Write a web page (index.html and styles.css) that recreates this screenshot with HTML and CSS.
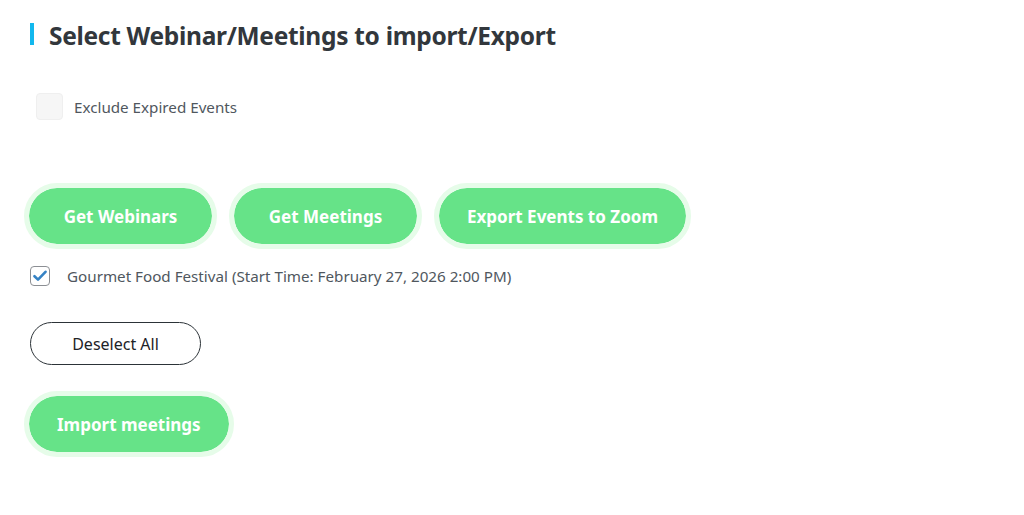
FILE: index.html
```html
<!DOCTYPE html>
<html lang="en">
<head>
    <meta charset="UTF-8">
    <meta name="viewport" content="width=device-width, initial-scale=1.0">
    <title>Import / Export</title>
    <link rel="stylesheet" href="styles.css">
</head>
<body>
    <div class="wrap">
        <h2 class="section-title">Select Webinar/Meetings to import/Export</h2>

        <label class="exclude-row">
            <span class="soft-check"></span>
            <span>Exclude Expired Events</span>
        </label>

        <div class="actions">
            <button class="btn-green">Get Webinars</button>
            <button class="btn-green">Get Meetings</button>
            <button class="btn-green">Export Events to Zoom</button>
        </div>

        <ul class="event-list">
            <li class="event-item">
                <span class="wp-check">
                    <svg width="14" height="12" viewBox="0 0 14 12"><path d="M1.5 6.2 L5 9.6 L12.5 1.8" fill="none" stroke="#3582c4" stroke-width="2.6" stroke-linecap="round" stroke-linejoin="round"/></svg>
                </span>
                <span>Gourmet Food Festival (Start Time: February 27, 2026 2:00 PM)</span>
            </li>
        </ul>

        <button class="btn-outline">Deselect All</button>

        <div class="actions">
            <button class="btn-green">Import meetings</button>
        </div>
    </div>
</body>
</html>
```

FILE: styles.css
```css
body {
    font-family: "Noto Sans", "Open Sans", sans-serif;
    margin: 0;
    padding: 0;
    background: #fff;
    color: #50575e;
}

.wrap {
    padding: 23px 24px;
}

.section-title {
    margin: 0 0 0 6px;
    padding-left: 15px;
    border-left: 4px solid #12b8ee;
    font-size: 24.5px;
    font-weight: 700;
    line-height: 19px;
    padding-top: 3px;
    color: #32373c;
    letter-spacing: -0.3px;
}

.exclude-row {
    display: flex;
    align-items: center;
    gap: 11px;
    margin: 48px 0 0 12px;
    font-size: 15.2px;
    color: #50575e;
}

.soft-check {
    width: 25px;
    height: 25px;
    background: #f6f6f6;
    border: 1px solid #efefef;
    border-radius: 4px;
}

.actions {
    display: flex;
    gap: 12px;
    margin-top: 63px;
}

.btn-green {
    min-width: 193px;
    height: 66px;
    padding: 0 28px;
    border: 5px solid #e6fce9;
    border-radius: 33px;
    background: #66e388;
    background-clip: padding-box;
    color: #fff;
    font-family: inherit;
    font-size: 17px;
    font-weight: 700;
    cursor: pointer;
}

.event-list {
    list-style: none;
    margin: 17px 0 0 6px;
    padding: 0;
}

.event-item {
    display: flex;
    align-items: center;
    gap: 17px;
    font-size: 15.2px;
}

.wp-check {
    display: flex;
    align-items: center;
    justify-content: center;
    width: 18px;
    height: 18px;
    border: 1px solid #8c8f94;
    border-radius: 4px;
}

.btn-outline {
    display: block;
    margin: 36px 0 0 6px;
    width: 171px;
    height: 43px;
    border: 1px solid #2c3338;
    border-radius: 22px;
    background: #fff;
    color: #1d2327;
    font-family: inherit;
    font-size: 16px;
    cursor: pointer;
}

.btn-outline + .actions {
    margin-top: 26px;
}
```
